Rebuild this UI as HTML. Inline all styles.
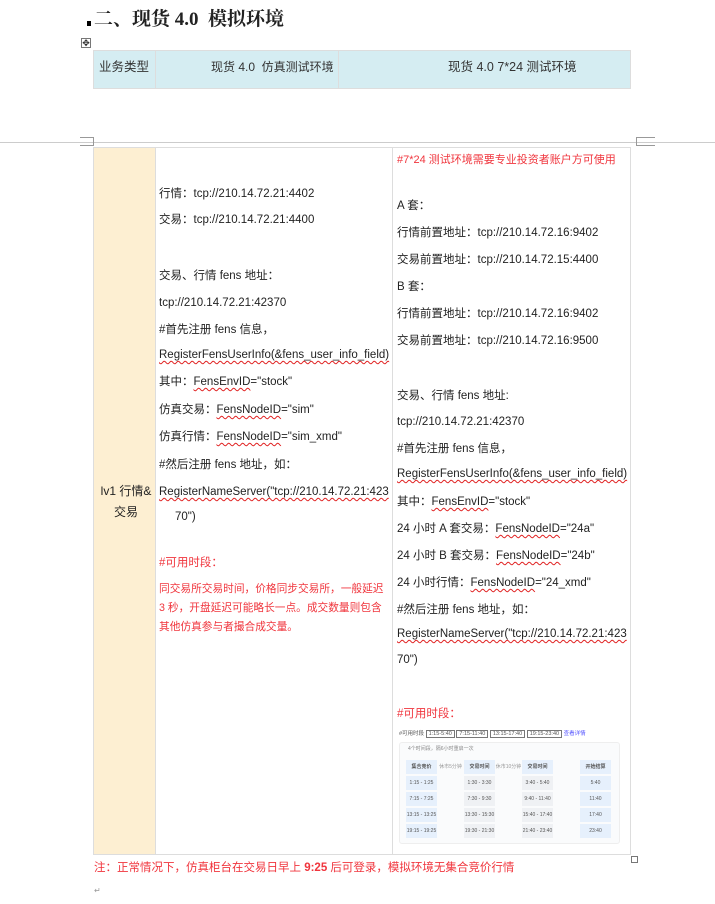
<!DOCTYPE html><html><head><meta charset="utf-8"><style>
body{margin:0;width:715px;height:904px;background:#fff;position:relative;overflow:hidden;font-family:"Liberation Sans","Noto Sans CJK SC",sans-serif;font-size:11.5px;color:#222}
.a{position:absolute;white-space:nowrap;line-height:14px}
.r{color:#f0353d}
.w{text-decoration:underline wavy #e02020;text-decoration-thickness:1px;text-underline-offset:2px}
.m{color:#999;font-size:8px}
.b{position:absolute;box-sizing:border-box}
.c{position:absolute;width:31px;height:14px;font-size:5px;line-height:14px;text-align:center;color:#555;white-space:nowrap}
.bl{background:#e6f0fc}.gr{background:#eff1f4}
</style></head><body>
<div class="a" style="left:94px;top:8px;font-size:19px;line-height:24px;font-weight:bold;font-family:'Liberation Serif','Noto Serif CJK SC',serif">二、现货 4.0&nbsp; 模拟环境</div>
<div class="b" style="left:87px;top:21px;width:4px;height:5px;background:#000"></div>
<div class="b" style="left:81px;top:38px;width:10px;height:10px;border:1px solid #777;font-size:9px;line-height:8px;text-align:center">✥</div>
<div class="b" style="left:93px;top:50px;width:538px;height:39px;background:#d5edf2;border:1px solid #ddd"></div>
<div class="b" style="left:155px;top:50px;width:1px;height:39px;background:#ddd"></div>
<div class="b" style="left:338px;top:50px;width:1px;height:39px;background:#ddd"></div>
<div class="a" style="left:99px;top:60px;font-size:12.5px;color:#333">业务类型</div>
<div class="a" style="left:211px;top:60px;font-size:12px;color:#333">现货 4.0&nbsp; 仿真测试环境</div>
<div class="a" style="left:448px;top:60px;font-size:12.5px;color:#333">现货 4.0 7*24 测试环境</div>
<div class="b" style="left:0;top:142px;width:715px;height:1px;background:#ccc"></div>
<div class="b" style="left:80px;top:137px;width:14px;height:9px;border-top:1px solid #999;border-bottom:1px solid #999;border-right:1px solid #999"></div>
<div class="b" style="left:636px;top:137px;width:19px;height:9px;border-top:1px solid #999;border-bottom:1px solid #999;border-left:1px solid #999"></div>
<div class="b" style="left:93px;top:147px;width:538px;height:708px;border:1px solid #ddd"></div>
<div class="b" style="left:94px;top:148px;width:61px;height:706px;background:#fdefd2"></div>
<div class="b" style="left:155px;top:147px;width:1px;height:708px;background:#ddd"></div>
<div class="b" style="left:392px;top:147px;width:1px;height:708px;background:#ddd"></div>
<div class="a" style="left:96px;top:481px;font-size:12px;line-height:21px;text-align:center;width:60px;white-space:normal">lv1 行情&amp;<br>交易</div>

<div class="a" style="left:159px;top:187px">行情：tcp://210.14.72.21:4402</div>
<div class="a" style="left:159px;top:213px">交易：tcp://210.14.72.21:4400</div>
<div class="a" style="left:159px;top:269px">交易、行情 fens 地址：</div>
<div class="a" style="left:159px;top:296px">tcp://210.14.72.21:42370</div>
<div class="a" style="left:159px;top:323px">#首先注册 fens 信息，</div>
<div class="a" style="left:159px;top:348px"><span class="w">RegisterFensUserInfo(&amp;fens_user_info_field)</span></div>
<div class="a" style="left:159px;top:375px">其中：<span class="w">FensEnvID</span>="stock"</div>
<div class="a" style="left:159px;top:403px">仿真交易：<span class="w">FensNodeID</span>="sim"</div>
<div class="a" style="left:159px;top:430px">仿真行情：<span class="w">FensNodeID</span>="sim_xmd"</div>
<div class="a" style="left:159px;top:458px">#然后注册 fens 地址，如：</div>
<div class="a" style="left:159px;top:485px"><span class="w">RegisterNameServer("tcp://210.14.72.21:423</span></div>
<div class="a" style="left:175px;top:510px">70")</div>
<div class="a r" style="left:159px;top:556px">#可用时段：</div>
<div class="a r" style="left:159px;top:580px;font-size:10.7px;line-height:19px">同交易所交易时间，价格同步交易所，一般延迟</div>
<div class="a r" style="left:159px;top:599px;font-size:10.7px;line-height:19px">3 秒，开盘延迟可能略长一点。成交数量则包含</div>
<div class="a r" style="left:159px;top:618px;font-size:10.7px;line-height:19px">其他仿真参与者撮合成交量。</div>

<div class="a r" style="left:397px;top:153px;font-size:11px">#7*24 测试环境需要专业投资者账户方可使用</div>
<div class="a" style="left:397px;top:199px">A 套：</div>
<div class="a" style="left:397px;top:226px">行情前置地址：tcp://210.14.72.16:9402</div>
<div class="a" style="left:397px;top:253px">交易前置地址：tcp://210.14.72.15:4400</div>
<div class="a" style="left:397px;top:280px">B 套：</div>
<div class="a" style="left:397px;top:307px">行情前置地址：tcp://210.14.72.16:9402</div>
<div class="a" style="left:397px;top:334px">交易前置地址：tcp://210.14.72.16:9500</div>
<div class="a" style="left:397px;top:389px">交易、行情 fens 地址:</div>
<div class="a" style="left:397px;top:415px">tcp://210.14.72.21:42370</div>
<div class="a" style="left:397px;top:442px">#首先注册 fens 信息，</div>
<div class="a" style="left:397px;top:467px"><span class="w">RegisterFensUserInfo(&amp;fens_user_info_field)</span></div>
<div class="a" style="left:397px;top:495px">其中：<span class="w">FensEnvID</span>="stock"</div>
<div class="a" style="left:397px;top:522px">24 小时 A 套交易：<span class="w">FensNodeID</span>="24a"</div>
<div class="a" style="left:397px;top:549px">24 小时 B 套交易：<span class="w">FensNodeID</span>="24b"</div>
<div class="a" style="left:397px;top:576px">24 小时行情：<span class="w">FensNodeID</span>="24_xmd"</div>
<div class="a" style="left:397px;top:603px">#然后注册 fens 地址，如：</div>
<div class="a" style="left:397px;top:627px"><span class="w">RegisterNameServer("tcp://210.14.72.21:423</span></div>
<div class="a" style="left:397px;top:653px">70")</div>
<div class="a r" style="left:397px;top:707px">#可用时段：</div>

<div class="a" style="left:399px;top:730px;font-size:5.5px;line-height:9px;color:#555">#可用时段 <span style="border:1px solid #777;padding:0 2px">1:15-5:40</span> <span style="border:1px solid #777;padding:0 2px">7:15-11:40</span> <span style="border:1px solid #777;padding:0 2px">13:15-17:40</span> <span style="border:1px solid #777;padding:0 2px">19:15-23:40</span> <span style="color:#55f">查看详情</span></div>
<div class="b" style="left:399px;top:742px;width:221px;height:102px;background:#fafbfc;border-radius:3px;border:1px solid #eee"></div>
<div class="a" style="left:408px;top:746px;font-size:5px;line-height:7px;color:#888">4个时间段，隔6小时重启一次</div>
<div class="c bl" style="left:406px;top:760px;font-weight:bold">集合竞价</div>
<div class="c bl" style="left:464px;top:760px;font-weight:bold">交易时间</div>
<div class="c bl" style="left:522px;top:760px;font-weight:bold">交易时间</div>
<div class="c bl" style="left:580px;top:760px;font-weight:bold">开始结算</div>
<div class="c" style="left:435px;top:760px;color:#999">休市5分钟</div>
<div class="c" style="left:493px;top:760px;color:#999">休市10分钟</div>
<div class="c bl" style="left:406px;top:776px">1:15 - 1:25</div><div class="c gr" style="left:464px;top:776px">1:30 - 3:30</div><div class="c gr" style="left:522px;top:776px">3:40 - 5:40</div><div class="c bl" style="left:580px;top:776px">5:40</div>
<div class="c bl" style="left:406px;top:792px">7:15 - 7:25</div><div class="c gr" style="left:464px;top:792px">7:30 - 9:30</div><div class="c gr" style="left:522px;top:792px">9:40 - 11:40</div><div class="c bl" style="left:580px;top:792px">11:40</div>
<div class="c bl" style="left:406px;top:808px">13:15 - 13:25</div><div class="c gr" style="left:464px;top:808px">13:30 - 15:30</div><div class="c gr" style="left:522px;top:808px">15:40 - 17:40</div><div class="c bl" style="left:580px;top:808px">17:40</div>
<div class="c bl" style="left:406px;top:824px">19:15 - 19:25</div><div class="c gr" style="left:464px;top:824px">19:30 - 21:30</div><div class="c gr" style="left:522px;top:824px">21:40 - 23:40</div><div class="c bl" style="left:580px;top:824px">23:40</div>

<div class="b" style="left:631px;top:856px;width:7px;height:7px;border:1px solid #777"></div>
<div class="a r" style="left:94px;top:861px;font-size:11.5px">注：正常情况下，仿真柜台在交易日早上 <b>9:25</b> 后可登录，模拟环境无集合竞价行情</div>
<div class="a m" style="left:94px;top:884px">↵</div>
</body></html>
